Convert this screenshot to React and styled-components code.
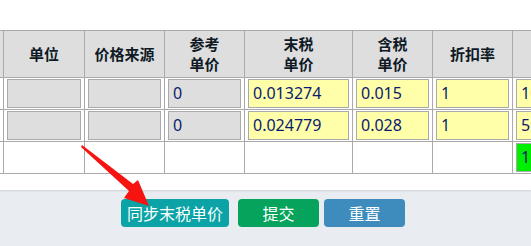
import React from "react";
import styled, { createGlobalStyle } from "styled-components";

const GlobalStyle = createGlobalStyle`
  html, body {
    margin: 0;
    padding: 0;
    background: #e9ecf1;
    font-family: "Noto Sans", "Noto Sans CJK SC", sans-serif;
  }
`;

const Page = styled.div`
  position: relative;
  width: 531px;
  height: 246px;
  overflow: hidden;
  background: #e9ecf1;
`;

const Panel = styled.div`
  background: #fff;
  height: 190px;
  padding-top: 30px;
  box-sizing: border-box;
  overflow: hidden;
  box-shadow: 0 1px 2px rgba(0, 0, 0, 0.12);
`;

const Table = styled.table`
  border-collapse: collapse;
  table-layout: fixed;
  width: 629px;
  margin-left: -37px;
  font-family: "Noto Sans CJK SC", "Noto Sans", sans-serif;
`;

const Th = styled.th`
  background: #dedede;
  border: 1px solid #aaa;
  height: 46px;
  padding: 0;
  font-size: 15px;
  font-weight: bold;
  line-height: 20px;
  color: #0f1a26;
  text-align: center;
  vertical-align: middle;
`;

const Td = styled.td`
  border: 1px solid #aaa;
  height: 32px;
  padding: 0 3px;
  box-sizing: border-box;
  vertical-align: middle;
`;

const Field = styled.div`
  box-sizing: border-box;
  height: 29px;
  border: 1px solid #aaa;
  background: ${(p) => (p.$tone === "edit" ? "#ffffaa" : p.$tone === "ok" ? "#00ee00" : "#dedede")};
  color: #0a1a6e;
  font-family: "Noto Sans", sans-serif;
  font-size: 16px;
  line-height: 27px;
  padding: 0 4px;
  white-space: nowrap;
  overflow: hidden;
`;

const Footer = styled.div`
  display: flex;
  padding: 9px 0 0 121px;
`;

const Button = styled.button`
  box-sizing: border-box;
  width: ${(p) => p.$w}px;
  height: 28px;
  margin-right: ${(p) => p.$gap || 0}px;
  border: none;
  border-radius: 4px;
  background: ${(p) => p.$bg};
  color: #fff;
  font-family: "Noto Sans CJK SC", sans-serif;
  font-size: 16px;
  padding: 0;
  cursor: pointer;
`;

const Arrow = styled.svg`
  position: absolute;
  left: 0;
  top: 0;
  pointer-events: none;
`;

const rows = [
  { ref: "0", net: "0.013274", gross: "0.015", rate: "1", last: "10" },
  { ref: "0", net: "0.024779", gross: "0.028", rate: "1", last: "50" },
];

export default function App() {
  return (
    <Page>
      <GlobalStyle />
      <Panel>
        <Table>
          <colgroup>
            <col style={{ width: 40 }} />
            <col style={{ width: 81 }} />
            <col style={{ width: 80 }} />
            <col style={{ width: 80 }} />
            <col style={{ width: 108 }} />
            <col style={{ width: 80 }} />
            <col style={{ width: 80 }} />
            <col style={{ width: 80 }} />
          </colgroup>
          <thead>
            <tr>
              <Th />
              <Th>单位</Th>
              <Th>价格来源</Th>
              <Th>参考<br />单价</Th>
              <Th>末税<br />单价</Th>
              <Th>含税<br />单价</Th>
              <Th>折扣率</Th>
              <Th />
            </tr>
          </thead>
          <tbody>
            {rows.map((r, i) => (
              <tr key={i}>
                <Td />
                <Td><Field /></Td>
                <Td><Field /></Td>
                <Td><Field>{r.ref}</Field></Td>
                <Td><Field $tone="edit">{r.net}</Field></Td>
                <Td><Field $tone="edit">{r.gross}</Field></Td>
                <Td><Field $tone="edit">{r.rate}</Field></Td>
                <Td><Field $tone="edit">{r.last}</Field></Td>
              </tr>
            ))}
            <tr>
              <Td />
              <Td />
              <Td />
              <Td />
              <Td />
              <Td />
              <Td />
              <Td><Field $tone="ok">15</Field></Td>
            </tr>
          </tbody>
        </Table>
      </Panel>
      <Footer>
        <Button $w={108} $gap={9} $bg="#0ba3a5">同步末税单价</Button>
        <Button $w={81} $gap={5} $bg="#05a35b">提交</Button>
        <Button $w={81} $bg="#3e8bbd">重置</Button>
      </Footer>
      <Arrow width="531" height="246" viewBox="0 0 531 246">
        <polygon
          points="82,145 133,184 138,180 149,206 124,198 129,191 81,147"
          fill="#f5140f"
        />
      </Arrow>
    </Page>
  );
}
